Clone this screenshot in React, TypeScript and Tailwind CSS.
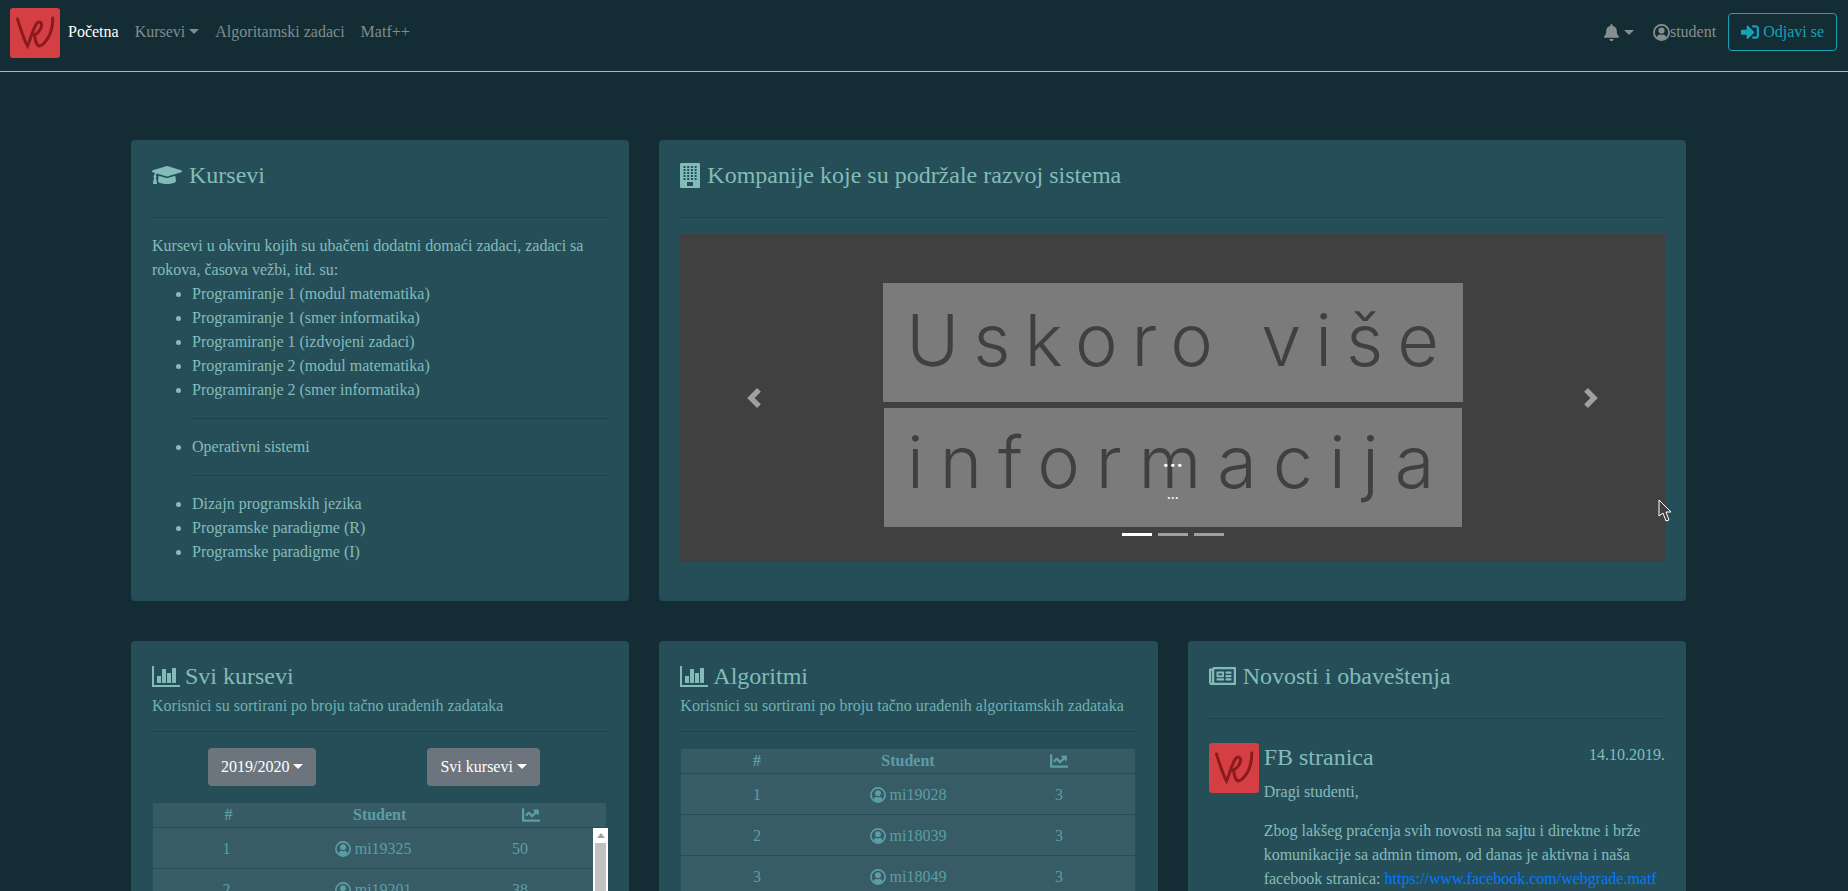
import { FaBell, FaChartLine, FaGraduationCap, FaRegNewspaper, FaSignInAlt } from "react-icons/fa";
import type { ReactNode } from "react";

const Caret = ({ className = "" }: { className?: string }) => (
  <span
    className={`inline-block w-0 h-0 ml-[4px] align-[3px] border-x-[5px] border-x-transparent border-t-[5px] border-t-current ${className}`}
  />
);

const Logo = () => (
  <div className="w-[50px] h-[50px] rounded-[3px] bg-[#d33f43] shrink-0">
    <svg viewBox="0 0 50 50" className="w-full h-full" fill="none">
      <path
        d="M7.5 11 C10 19 14 32 17.5 38 C20 33 23 20 27 15 C29 13 32 14 31.5 18 C31 22 27 26 24.5 27 C25 31 26 37 29 38 C33 38 38 31 40 26 C41.5 22 43 15 42.7 10"
        stroke="#8c1a1c"
        strokeWidth="3"
        strokeLinecap="round"
      />
    </svg>
  </div>
);

const BarsIcon = () => (
  <svg viewBox="0 0 28 21" className="w-[28px] h-[21px] -mr-[2px] shrink-0" fill="currentColor">
    <path d="M0 0h2v19h26v2H0z" />
    <rect x="5" y="10" width="4" height="7" />
    <rect x="10" y="3" width="4" height="14" />
    <rect x="15" y="7" width="4" height="10" />
    <rect x="20" y="2" width="4" height="15" />
  </svg>
);

const BuildingIcon = () => (
  <svg viewBox="0 0 20 25" className="w-[20px] h-[25px] shrink-0">
    <rect width="20" height="25" rx="1" fill="currentColor" />
    {[3, 6, 9, 12, 15].map((y) =>
      [3.5, 7.2, 10.9, 14.6].map((x) => <rect key={`${x}-${y}`} x={x} y={y} width="2" height="2" fill="#264e59" />)
    )}
    <rect x="7" y="19" width="6" height="4" fill="#264e59" />
  </svg>
);

const UserIcon = ({ className = "" }: { className?: string }) => (
  <svg viewBox="0 0 16 16" className={`shrink-0 ${className}`} fill="currentColor">
    <circle cx="8" cy="8" r="7.1" fill="none" stroke="currentColor" strokeWidth="1.7" />
    <circle cx="8" cy="6.2" r="2.9" />
    <path d="M3.4 12.6 C4.2 10.4 5.6 9.7 6.6 9.9 C7.5 10.2 8.5 10.2 9.4 9.9 C10.4 9.7 11.8 10.4 12.6 12.6 C10 15 6 15 3.4 12.6 Z" />
  </svg>
);

const Card = ({
  icon,
  title,
  subtitle,
  className = "",
  children,
}: {
  icon: ReactNode;
  title: string;
  subtitle?: string;
  className?: string;
  children: ReactNode;
}) => (
  <div className={`bg-[#264e59] rounded-[4px] px-[21px] pt-[21px] pb-[37px] ${className}`}>
    <div className={`${subtitle ? "h-[70px]" : "h-[57px]"} border-b border-[#1f404b]`}>
      <div className="flex items-center gap-[7px] h-[28px] text-[24px] leading-[28px] text-[#82bcb8]">
        {icon}
        <span>{title}</span>
      </div>
      {subtitle && <div className="mt-[4px] text-[16px] leading-[24px] text-[#6fb0b0]">{subtitle}</div>}
    </div>
    <div className="pt-[16px]">{children}</div>
  </div>
);

const Table = ({ rows, scroll }: { rows: [number, string, number][]; scroll?: boolean }) => (
  <div className="text-[#5b9ea6] text-[16px]">
    <div className="grid grid-cols-3 h-[24px] ml-[1px] mr-[2px] bg-[#365b65] items-center text-center font-bold">
      <span>#</span>
      <span>Student</span>
      <span className="flex justify-center">
        <FaChartLine className="w-[18px] h-[18px]" />
      </span>
    </div>
    <div className="flex mt-[1px]">
      <div className={`flex-1 ml-[1px] ${scroll ? "" : "mr-[2px]"}`}>
        {rows.map(([n, name, score]) => (
          <div
            key={name}
            className="grid grid-cols-3 h-[41px] bg-[#385c66] border-t border-b border-t-transparent border-b-[#264e59] items-center text-center"
          >
            <span>{n}</span>
            <span className="flex items-center justify-center gap-[4px]">
              <UserIcon className="w-[16px] h-[16px]" />
              {name}
            </span>
            <span>{score}</span>
          </div>
        ))}
      </div>
      {scroll && (
        <div className="w-[15px] h-[70px] bg-white flex flex-col items-center">
          <div className="mt-[5px] w-0 h-0 border-x-[4px] border-x-transparent border-b-[5px] border-b-[#a3a3a3]" />
          <div className="mt-[5px] w-[11px] flex-1 bg-[#c1c1c1]" />
        </div>
      )}
    </div>
  </div>
);

export default function App() {
  return (
    <div className="h-[891px] overflow-hidden bg-[#142c33] font-['Liberation_Serif',serif] text-[16px] leading-[24px] text-[#84bcb9]">
      <nav className="h-[72px] border-b border-[#8fc5c0] flex items-start pt-[8px] pl-[10px] pr-[11px]">
        <Logo />
        <div className="flex items-center h-[48px] ml-[8px] text-[#7f8d90]">
          <a className="text-white">Početna</a>
          <a className="ml-[16px]">
            Kursevi
            <Caret />
          </a>
          <a className="ml-[16px]">Algoritamski zadaci</a>
          <a className="ml-[16px]">Matf++</a>
        </div>
        <div className="ml-auto flex items-center mt-[5px] text-[#84908f]">
          <FaBell className="w-[17px] h-[17px]" />
          <Caret className="mr-[19px]" />
          <UserIcon className="w-[17px] h-[17px]" />
          <span className="mr-[12px]">student</span>
          <button className="h-[38px] px-[12px] border border-[#17a2b8] rounded-[4px] text-[#17a2b8] flex items-center gap-[4px]">
            <FaSignInAlt className="w-[18px] h-[18px]" />
            Odjavi se
          </button>
        </div>
      </nav>

      <main className="mt-[68px] ml-[131px] w-[1555px] grid grid-cols-3 gap-x-[30px] gap-y-[40px]">
        <Card icon={<FaGraduationCap className="w-[30px] h-[24px]" />} title="Kursevi">
          <p>Kursevi u okviru kojih su ubačeni dodatni domaći zadaci, zadaci sa rokova, časova vežbi, itd. su:</p>
          <ul className="list-disc pl-[40px]">
            <li>Programiranje 1 (modul matematika)</li>
            <li>Programiranje 1 (smer informatika)</li>
            <li>Programiranje 1 (izdvojeni zadaci)</li>
            <li>Programiranje 2 (modul matematika)</li>
            <li>Programiranje 2 (smer informatika)</li>
            <li className="list-none mt-[16px] mb-[16px] border-t border-[#1f404b]" />
            <li>Operativni sistemi</li>
            <li className="list-none mt-[16px] mb-[16px] border-t border-[#1f404b]" />
            <li>Dizajn programskih jezika</li>
            <li>Programske paradigme (R)</li>
            <li>Programske paradigme (I)</li>
          </ul>
        </Card>

        <Card className="col-span-2" icon={<BuildingIcon />} title="Kompanije koje su podržale razvoj sistema">
          <div className="relative h-[328px] bg-[#404040] flex flex-col items-center pt-[49px] gap-[6px]">
            <div className="w-[580px] h-[119px] bg-[#7b7b7b] flex items-center justify-center pb-[6px] pl-[14px] text-[72px] text-[#404040] tracking-[14px] font-['Inter',sans-serif] font-light whitespace-nowrap">
              Uskoro više
            </div>
            <div className="w-[578px] h-[119px] bg-[#7b7b7b] flex items-center justify-center pb-[12px] pl-[12px] text-[72px] text-[#404040] tracking-[16px] font-['Inter',sans-serif] font-light whitespace-nowrap">
              informacija
            </div>
            <svg viewBox="0 0 8 8" className="absolute left-[64px] top-[154px] w-[20px] h-[20px] opacity-50" fill="#fff">
              <path d="M5.25 0l-4 4 4 4 1.5-1.5L4.25 4l2.5-2.5L5.25 0z" />
            </svg>
            <svg viewBox="0 0 8 8" className="absolute right-[64px] top-[154px] w-[20px] h-[20px] opacity-50" fill="#fff">
              <path d="M2.75 0l-1.5 1.5L3.75 4l-2.5 2.5L2.75 8l4-4-4-4z" />
            </svg>
            <div className="absolute left-0 right-0 top-[212px] text-center text-white text-[28px] leading-[24px]">...</div>
            <div className="absolute left-0 right-0 top-[248px] text-center text-white text-[16px] leading-[24px]">...</div>
            <div className="absolute bottom-[26px] left-0 right-0 flex justify-center gap-[6px]">
              <span className="w-[30px] h-[3px] bg-white" />
              <span className="w-[30px] h-[3px] bg-white/50" />
              <span className="w-[30px] h-[3px] bg-white/50" />
            </div>
            <svg viewBox="0 0 14 24" className="absolute right-[-7px] top-[265px] w-[14px] h-[24px]" fill="#404040" stroke="#fff" strokeWidth="1">
              <path d="M1 1 L1 17 L5 14 L8 22 L11 21 L8 13 L13 13 Z" />
            </svg>
          </div>
        </Card>

        <Card icon={<BarsIcon />} title="Svi kursevi" subtitle="Korisnici su sortirani po broju tačno urađenih zadataka">
          <div className="flex ml-[56px] mb-[17px] gap-[111px]">
            <button className="h-[38px] px-[13px] bg-[#6c757d] text-white rounded-[4px] whitespace-nowrap">
              2019/2020
              <Caret />
            </button>
            <button className="h-[38px] px-[13px] bg-[#6c757d] text-white rounded-[4px] whitespace-nowrap">
              Svi kursevi
              <Caret />
            </button>
          </div>
          <Table
            scroll
            rows={[
              [1, "mi19325", 50],
              [2, "mi19201", 38],
            ]}
          />
        </Card>

        <Card
          icon={<BarsIcon />}
          title="Algoritmi"
          subtitle="Korisnici su sortirani po broju tačno urađenih algoritamskih zadataka"
        >
          <div className="mt-[1px]">
            <Table
              rows={[
                [1, "mi19028", 3],
                [2, "mi18039", 3],
                [3, "mi18049", 3],
              ]}
            />
          </div>
        </Card>

        <Card icon={<FaRegNewspaper className="w-[27px] h-[24px]" />} title="Novosti i obaveštenja">
          <div className="flex gap-[5px] mt-[8px]">
            <Logo />
            <div className="flex-1">
              <div className="flex justify-between">
                <span className="text-[24px] leading-[29px]">FB stranica</span>
                <span>14.10.2019.</span>
              </div>
              <p className="mt-[8px]">Dragi studenti,</p>
              <p className="mt-[15px]">
                Zbog lakšeg praćenja svih novosti na sajtu i direktne i brže komunikacije sa admin timom, od danas je
                aktivna i naša facebook stranica: <a className="text-[#007bff]">https://www.facebook.com/webgrade.matf</a>
              </p>
            </div>
          </div>
        </Card>
      </main>
    </div>
  );
}
